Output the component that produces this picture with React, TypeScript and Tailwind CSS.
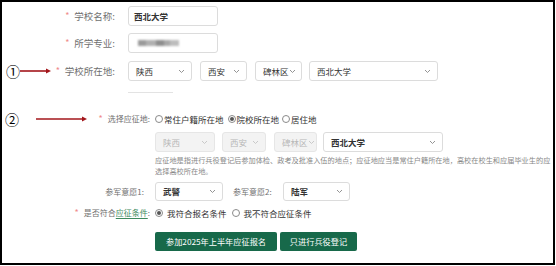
import React from "react";

const Chevron = ({ color = "#888" }: { color?: string }) => (
  <svg width="7" height="5" viewBox="0 0 7 5" className="shrink-0">
    <path d="M1 1 L3.5 3.5 L6 1" fill="none" stroke={color} strokeWidth="0.9" />
  </svg>
);

const Select = ({
  w,
  text,
  disabled = false,
  bold = false,
  h = "h-[20px]",
  fs = "text-[8.5px]",
}: {
  w: string;
  text: string;
  disabled?: boolean;
  bold?: boolean;
  h?: string;
  fs?: string;
}) => (
  <div
    className={`${w} ${h} ${fs} shrink-0 flex items-center justify-between pl-[7px] pr-[6px] rounded-[3px] border ${
      disabled ? "bg-[#f3f3f3] border-[#e6e6e6] text-[#b8b8b8]" : "bg-white border-[#dcdcdc] text-[#333]"
    } ${bold ? "font-bold" : ""}`}
  >
    <span className="whitespace-nowrap">{text}</span>
    <Chevron color={disabled ? "#c4c4c4" : "#888"} />
  </div>
);

const Radio = ({ checked }: { checked?: boolean }) => (
  <span className="w-[8px] h-[8px] rounded-full border border-[#8a8a8a] flex items-center justify-center shrink-0 bg-white">
    {checked && <span className="w-[4px] h-[4px] rounded-full bg-[#555]" />}
  </span>
);

const Arrow = ({ w }: { w: number }) => (
  <svg width={w} height="6" viewBox={`0 0 ${w} 6`} className="shrink-0">
    <line x1="0" y1="3" x2={w - 4} y2="3" stroke="#a3161b" strokeWidth="1.6" />
    <path d={`M${w - 5} 0.5 L${w} 3 L${w - 5} 5.5 Z`} fill="#a3161b" />
  </svg>
);

const Star = () => <span className="text-[#ef8b8b] mr-[5px] text-[9px]">*</span>;

export default function App() {
  return (
    <div className="w-[556px] h-[266px] bg-white font-['Noto_Sans_CJK_SC','Noto_Sans',sans-serif]">
      <div className="w-[555px] h-[265px] border-2 border-black overflow-hidden flex flex-col">
        {/* Section 1 */}
        <div className="mt-[4px] h-[20px] flex items-center">
          <div className="w-[113px] flex justify-end items-center text-[9.5px] text-[#707070]">
            <Star />
            学校名称:
          </div>
          <div className="ml-[13px] w-[90px] h-[20px] rounded-[3px] border border-[#dcdcdc] flex items-center pl-[5px] text-[8.5px] font-bold text-[#333]">
            西北大学
          </div>
        </div>
        <div className="mt-[7px] h-[20px] flex items-center">
          <div className="w-[113px] flex justify-end items-center text-[9.5px] text-[#707070]">
            <Star />
            所学专业:
          </div>
          <div className="ml-[13px] w-[90px] h-[20px] rounded-[3px] border border-[#dcdcdc] flex items-center pl-[9px]">
            <div className="flex h-[6px] blur-[1px]">
              <span className="w-[8px] bg-[#9a9a9a]" />
              <span className="w-[10px] bg-[#b0b0b0]" />
              <span className="w-[8px] bg-[#8e8e8e]" />
              <span className="w-[6px] bg-[#a8a8a8]" />
              <span className="w-[9px] bg-[#bdbdbd]" />
            </div>
          </div>
        </div>
        <div className="mt-[8px] h-[20px] flex items-center">
          <div className="w-[113px] flex items-center text-[9.5px] text-[#707070]">
            <span className="ml-[4px] text-[14px] leading-none text-black">①</span>
            <Arrow w={31} />
            <span className="ml-auto flex items-center">
              <Star />
              学校所在地:
            </span>
          </div>
          <div className="ml-[13px] flex items-center">
            <Select w="w-[64px]" text="陕西" />
            <div className="ml-[8px]">
              <Select w="w-[47px]" text="西安" />
            </div>
            <div className="ml-[8px]">
              <Select w="w-[47px]" text="碑林区" />
            </div>
            <div className="ml-[7px]">
              <Select w="w-[129px]" text="西北大学" />
            </div>
          </div>
        </div>
        <div className="mt-[11px] ml-[126px] w-[45px] h-px bg-[#e3e3e3]" />

        {/* Section 2 */}
        <div className="mt-[19px] h-[14px] flex items-center">
          <div className="w-[148px] flex items-center text-[8px] text-[#707070]">
            <span className="ml-[3px] text-[14px] leading-none text-black">②</span>
            <span className="ml-[17px] flex">
              <Arrow w={51} />
            </span>
            <span className="ml-auto flex items-center">
              <Star />
              选择应征地:
            </span>
          </div>
          <div className="ml-[5px] flex items-center text-[8.5px] text-[#333]">
            <Radio />
            <span className="ml-[1px]">常住户籍所在地</span>
            <span className="ml-[4px]">
              <Radio checked />
            </span>
            <span className="ml-[1px]">院校所在地</span>
            <span className="ml-[3px]">
              <Radio />
            </span>
            <span className="ml-[1px]">居住地</span>
          </div>
        </div>
        <div className="mt-[6px] h-[20px] flex items-center pl-[153px]">
          <Select w="w-[60px]" text="陕西" disabled />
          <div className="ml-[7px]">
            <Select w="w-[44px]" text="西安" disabled />
          </div>
          <div className="ml-[8px]">
            <Select w="w-[43px]" text="碑林区" disabled />
          </div>
          <div className="ml-[6px]">
            <Select w="w-[120px]" text="西北大学" bold />
          </div>
        </div>
        <div className="mt-[3px] pl-[153px] text-[7.2px] text-[#888] leading-[11px] whitespace-nowrap">
          <div>应征地是指进行兵役登记后参加体检、政考及批准入伍的地点；应征地应当是常住户籍所在地，高校在校生和应届毕业生的应</div>
          <div>选择高校所在地。</div>
        </div>
        <div className="mt-[5px] h-[19px] flex items-center">
          <div className="w-[148px] pr-[6px] text-right text-[8px] text-[#707070]">参军意愿1:</div>
          <div className="ml-[5px]">
            <Select w="w-[68px]" h="h-[19px]" text="武警" bold />
          </div>
          <div className="ml-[10px] w-[50px] text-[8px] text-[#707070]">参军意愿2:</div>
          <Select w="w-[67px]" h="h-[19px]" text="陆军" bold />
        </div>
        <div className="mt-[5px] h-[14px] flex items-center">
          <div className="w-[148px] flex justify-end items-center text-[8px] text-[#707070]">
            <Star />
            是否符合
            <span className="text-[#3e8a5e] underline underline-offset-2">应征条件</span>:
          </div>
          <div className="ml-[5px] flex items-center text-[8.5px] text-[#333]">
            <Radio checked />
            <span className="ml-[4px]">我符合报名条件</span>
            <span className="ml-[5px]">
              <Radio />
            </span>
            <span className="ml-[4px]">我不符合应征条件</span>
          </div>
        </div>
        <div className="mt-[12px] h-[19px] flex items-center pl-[153px]">
          <div className="w-[122px] h-[19px] rounded-[2px] bg-[#17694a] text-white text-[8.2px] flex items-center justify-center">
            参加2025年上半年应征报名
          </div>
          <div className="ml-[3px] w-[77px] h-[19px] rounded-[2px] bg-[#17694a] text-white text-[8.2px] flex items-center justify-center">
            只进行兵役登记
          </div>
        </div>
      </div>
    </div>
  );
}
